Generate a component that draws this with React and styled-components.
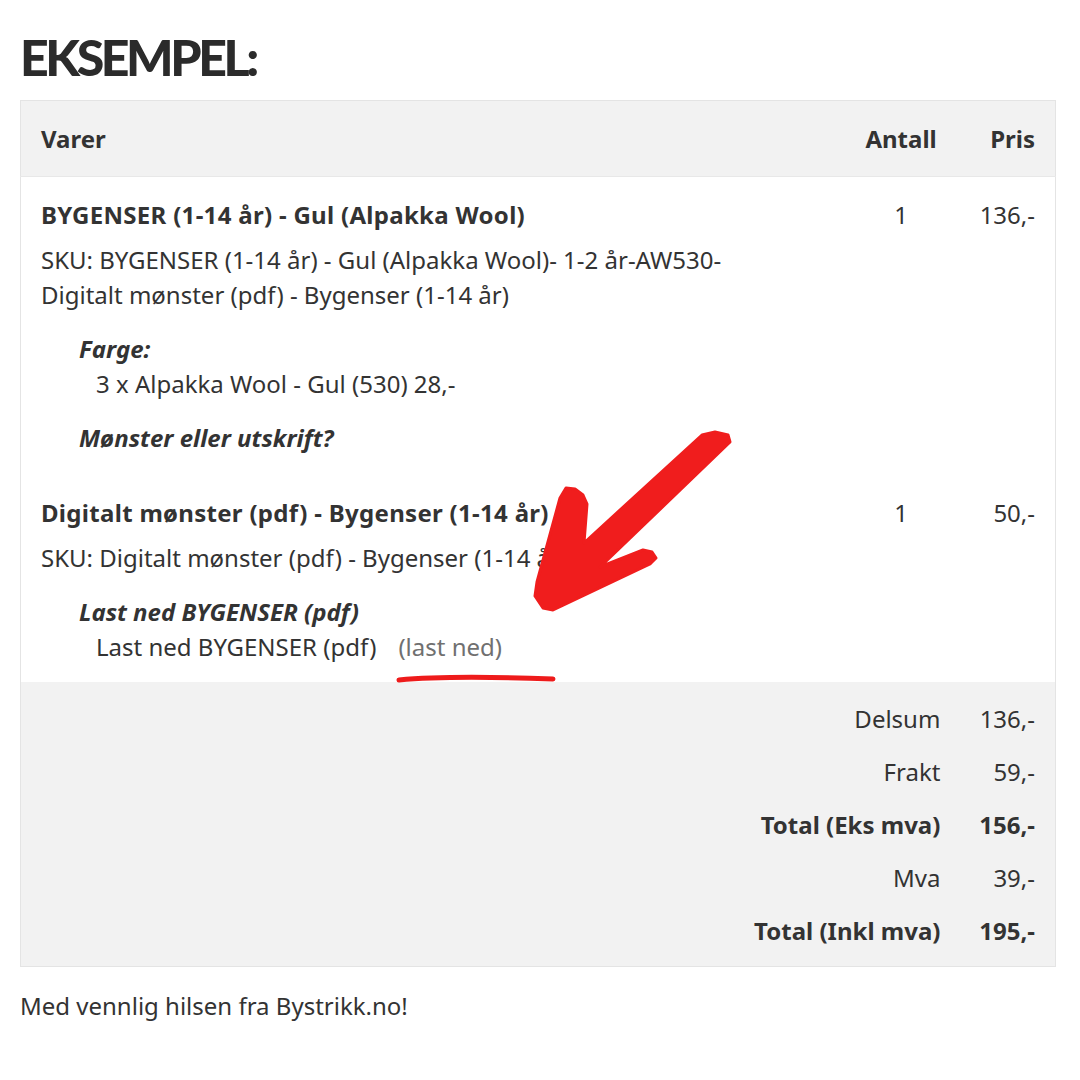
import styled, { createGlobalStyle } from "styled-components";

const GlobalStyle = createGlobalStyle`
  body {
    margin: 0;
    background: #fff;
    font-family: "Noto Sans", "Open Sans", sans-serif;
    color: #333;
  }
`;

const Page = styled.div`
  position: relative;
  width: 1080px;
  height: 1080px;
  padding: 26px 24px 0 20px;
  box-sizing: border-box;
`;

const Heading = styled.h1`
  margin: 0 0 12px;
  font-family: Lato, sans-serif;
  font-weight: 900;
  font-size: 50px;
  line-height: 62px;
  color: #2b2b2b;
  letter-spacing: -3.4px;
`;

const Table = styled.table`
  width: 100%;
  border-collapse: collapse;
  border: 1px solid #e4e4e4;
  font-size: 24px;
  line-height: 35px;
`;

const HeadCell = styled.th`
  background: #f2f2f2;
  padding: 20px 20px 20px ${({ $tight }) => ($tight ? "13px" : "20px")};
  font-weight: 700;
  text-align: ${({ $align }) => $align || "left"};
  border-bottom: 1px solid #e8e8e8;
  white-space: nowrap;
`;

const Cell = styled.td`
  vertical-align: top;
  padding: 20px 20px ${({ $last }) => ($last ? "18px" : "20px")}
    ${({ $tight }) => ($tight ? "13px" : "20px")};
  text-align: ${({ $align }) => $align || "left"};
  white-space: nowrap;
`;

const ItemTitle = styled.div`
  font-weight: 700;
  letter-spacing: 0.3px;
  margin-bottom: 10px;
`;

const Sku = styled.div`
  white-space: normal;
  width: 730px;
`;

const Meta = styled.div`
  margin-top: 19px;
  padding-left: 38px;
`;

const MetaLabel = styled.div`
  font-weight: 700;
  font-style: italic;
`;

const MetaValue = styled.div`
  padding-left: 17px;
`;

const Link = styled.span`
  color: #707070;
  margin-left: 22px;
`;

const FootRow = styled.tr`
  background: #f2f2f2;
`;

const FootCell = styled.td`
  text-align: right;
  padding-top: ${({ $pos }) => ($pos === "first" ? "19px" : "9px")};
  padding-bottom: ${({ $pos }) => ($pos === "last" ? "18px" : "9px")};
  padding-right: 20px;
  padding-left: ${({ $tight }) => ($tight ? "13px" : "20px")};
  font-weight: ${({ $bold }) => ($bold ? 700 : 400)};
  white-space: nowrap;
`;

const Greeting = styled.p`
  margin: 21px 0 0;
  font-size: 24px;
  line-height: 35px;
`;

const Overlay = styled.svg`
  position: absolute;
  left: 0;
  top: 0;
  pointer-events: none;
`;

const totals = [
  { label: "Delsum", value: "136,-" },
  { label: "Frakt", value: "59,-" },
  { label: "Total (Eks mva)", value: "156,-", bold: true },
  { label: "Mva", value: "39,-" },
  { label: "Total (Inkl mva)", value: "195,-", bold: true },
];

export default function App() {
  return (
    <>
      <GlobalStyle />
      <Page>
        <Heading>EKSEMPEL:</Heading>
        <Table>
          <thead>
            <tr>
              <HeadCell>Varer</HeadCell>
              <HeadCell $align="center">Antall</HeadCell>
              <HeadCell $align="right" $tight>Pris</HeadCell>
            </tr>
          </thead>
          <tbody>
            <tr>
              <Cell>
                <ItemTitle>BYGENSER (1-14 år) - Gul (Alpakka Wool)</ItemTitle>
                <Sku>
                  SKU: BYGENSER (1-14 år) - Gul (Alpakka Wool)- 1-2 år-AW530-
                  Digitalt mønster (pdf) - Bygenser (1-14 år)
                </Sku>
                <Meta>
                  <MetaLabel>Farge:</MetaLabel>
                  <MetaValue>3 x Alpakka Wool - Gul (530) 28,-</MetaValue>
                </Meta>
                <Meta>
                  <MetaLabel>Mønster eller utskrift?</MetaLabel>
                </Meta>
              </Cell>
              <Cell $align="center">1</Cell>
              <Cell $align="right" $tight>136,-</Cell>
            </tr>
            <tr>
              <Cell $last>
                <ItemTitle>Digitalt mønster (pdf) - Bygenser (1-14 år)</ItemTitle>
                <Sku>SKU: Digitalt mønster (pdf) - Bygenser (1-14 år)</Sku>
                <Meta>
                  <MetaLabel>Last ned BYGENSER (pdf)</MetaLabel>
                  <MetaValue>
                    Last ned BYGENSER (pdf)
                    <Link>(last ned)</Link>
                  </MetaValue>
                </Meta>
              </Cell>
              <Cell $last $align="center">1</Cell>
              <Cell $last $align="right" $tight>50,-</Cell>
            </tr>
          </tbody>
          <tfoot>
            {totals.map((t, i) => {
              const pos = i === 0 ? "first" : i === totals.length - 1 ? "last" : "";
              return (
                <FootRow key={t.label}>
                  <FootCell colSpan={2} $pos={pos} $bold={t.bold}>
                    {t.label}
                  </FootCell>
                  <FootCell $pos={pos} $bold={t.bold} $tight>
                    {t.value}
                  </FootCell>
                </FootRow>
              );
            })}
          </tfoot>
        </Table>
        <Greeting>Med vennlig hilsen fra Bystrikk.no!</Greeting>
        <Overlay width="1080" height="1080" viewBox="0 0 1080 1080">
          <polygon
            points="702,435 715,432 728,435 730,442 600,567 643,550 652,552 656,558 650,564 553,610 543,608 535,596 537,582 560,498 566,488 575,489 583,495 587,504 584,543"
            fill="#f01d1d"
            stroke="#f01d1d"
            strokeWidth="3"
            strokeLinejoin="round"
          />
          <path
            d="M399 680 C440 676 500 677 553 679"
            fill="none"
            stroke="#ee1b1b"
            strokeWidth="5"
            strokeLinecap="round"
          />
        </Overlay>
      </Page>
    </>
  );
}
